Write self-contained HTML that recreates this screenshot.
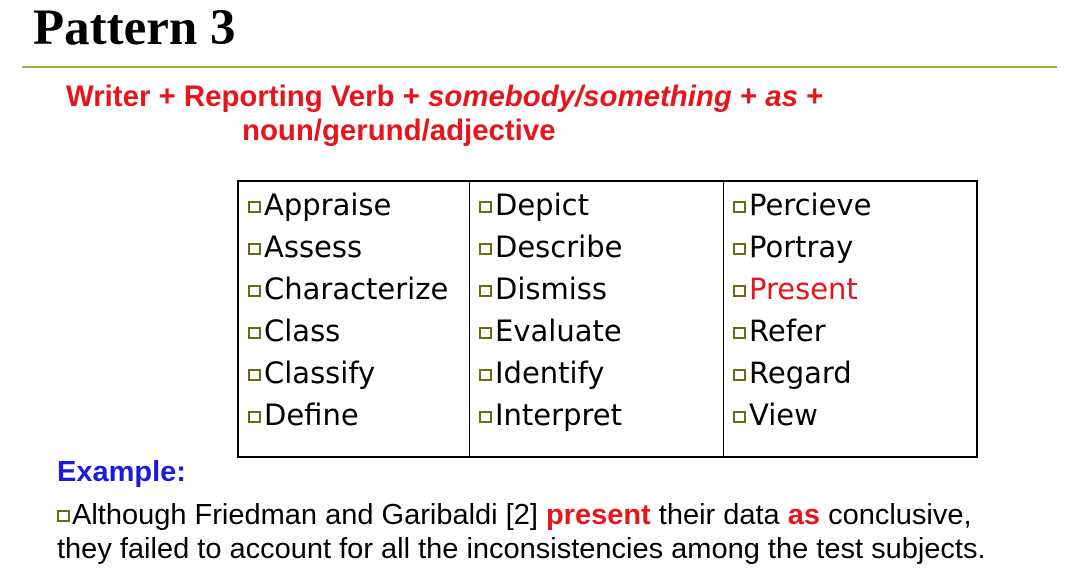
<!DOCTYPE html>
<html><head><style>
body{margin:0;width:1091px;height:586px;background:#fff;position:relative;overflow:hidden;font-family:"Liberation Sans",sans-serif}
.a{position:absolute;white-space:nowrap}
.t{font-family:"Liberation Serif",serif;font-weight:bold;font-size:51px;left:33px;top:-1px;color:#000}
.r{color:#e8141c;font-weight:bold;font-size:29.4px}
.tb{position:absolute;left:237px;top:180px;width:737px;height:274px;border:2px solid #000}
.v{position:absolute;top:0;bottom:0;width:1px;background:#000}
.c{position:absolute;top:2px;font-family:"DejaVu Sans",sans-serif;font-size:29px;line-height:42px;color:#000}
.c div{white-space:nowrap}
.b{display:inline-block;width:9px;height:8px;border:2px solid #6b6b10;margin-right:3px;vertical-align:2px}
.p{font-size:29px;left:57px;color:#000}
</style></head><body>
<div class="a t">Pattern 3</div>
<div class="a" style="left:22px;top:66px;width:1035px;height:2px;background:#a8ac3c"></div>
<div class="a r" style="left:66px;top:80px">Writer + Reporting Verb + <i>somebody/something</i> + <i>as</i> +</div>
<div class="a r" style="left:242px;top:114px">noun/gerund/adjective</div>
<div class="tb">
<div class="v" style="left:230px"></div>
<div class="v" style="left:484px"></div>
<div class="c" style="left:9px"><div><span class="b"></span>Appraise</div><div><span class="b"></span>Assess</div><div><span class="b"></span>Characterize</div><div><span class="b"></span>Class</div><div><span class="b"></span>Classify</div><div><span class="b"></span>Define</div></div>
<div class="c" style="left:240px"><div><span class="b"></span>Depict</div><div><span class="b"></span>Describe</div><div><span class="b"></span>Dismiss</div><div><span class="b"></span>Evaluate</div><div><span class="b"></span>Identify</div><div><span class="b"></span>Interpret</div></div>
<div class="c" style="left:494px"><div><span class="b"></span>Percieve</div><div><span class="b"></span>Portray</div><div><span class="b"></span><span style="color:#e8141c">Present</span></div><div><span class="b"></span>Refer</div><div><span class="b"></span>Regard</div><div><span class="b"></span>View</div></div>
</div>
<div class="a" style="left:57px;top:456px;font-size:29px;font-weight:bold;color:#1a1ae0">Example:</div>
<div class="a p" style="top:499px"><span class="b" style="margin-right:2px"></span>Although Friedman and Garibaldi [2] <b style="color:#e8141c">present</b> their data <b style="color:#e8141c">as</b> conclusive,</div>
<div class="a p" style="top:533px">they failed to account for all the inconsistencies among the test subjects.</div>
</body></html>
